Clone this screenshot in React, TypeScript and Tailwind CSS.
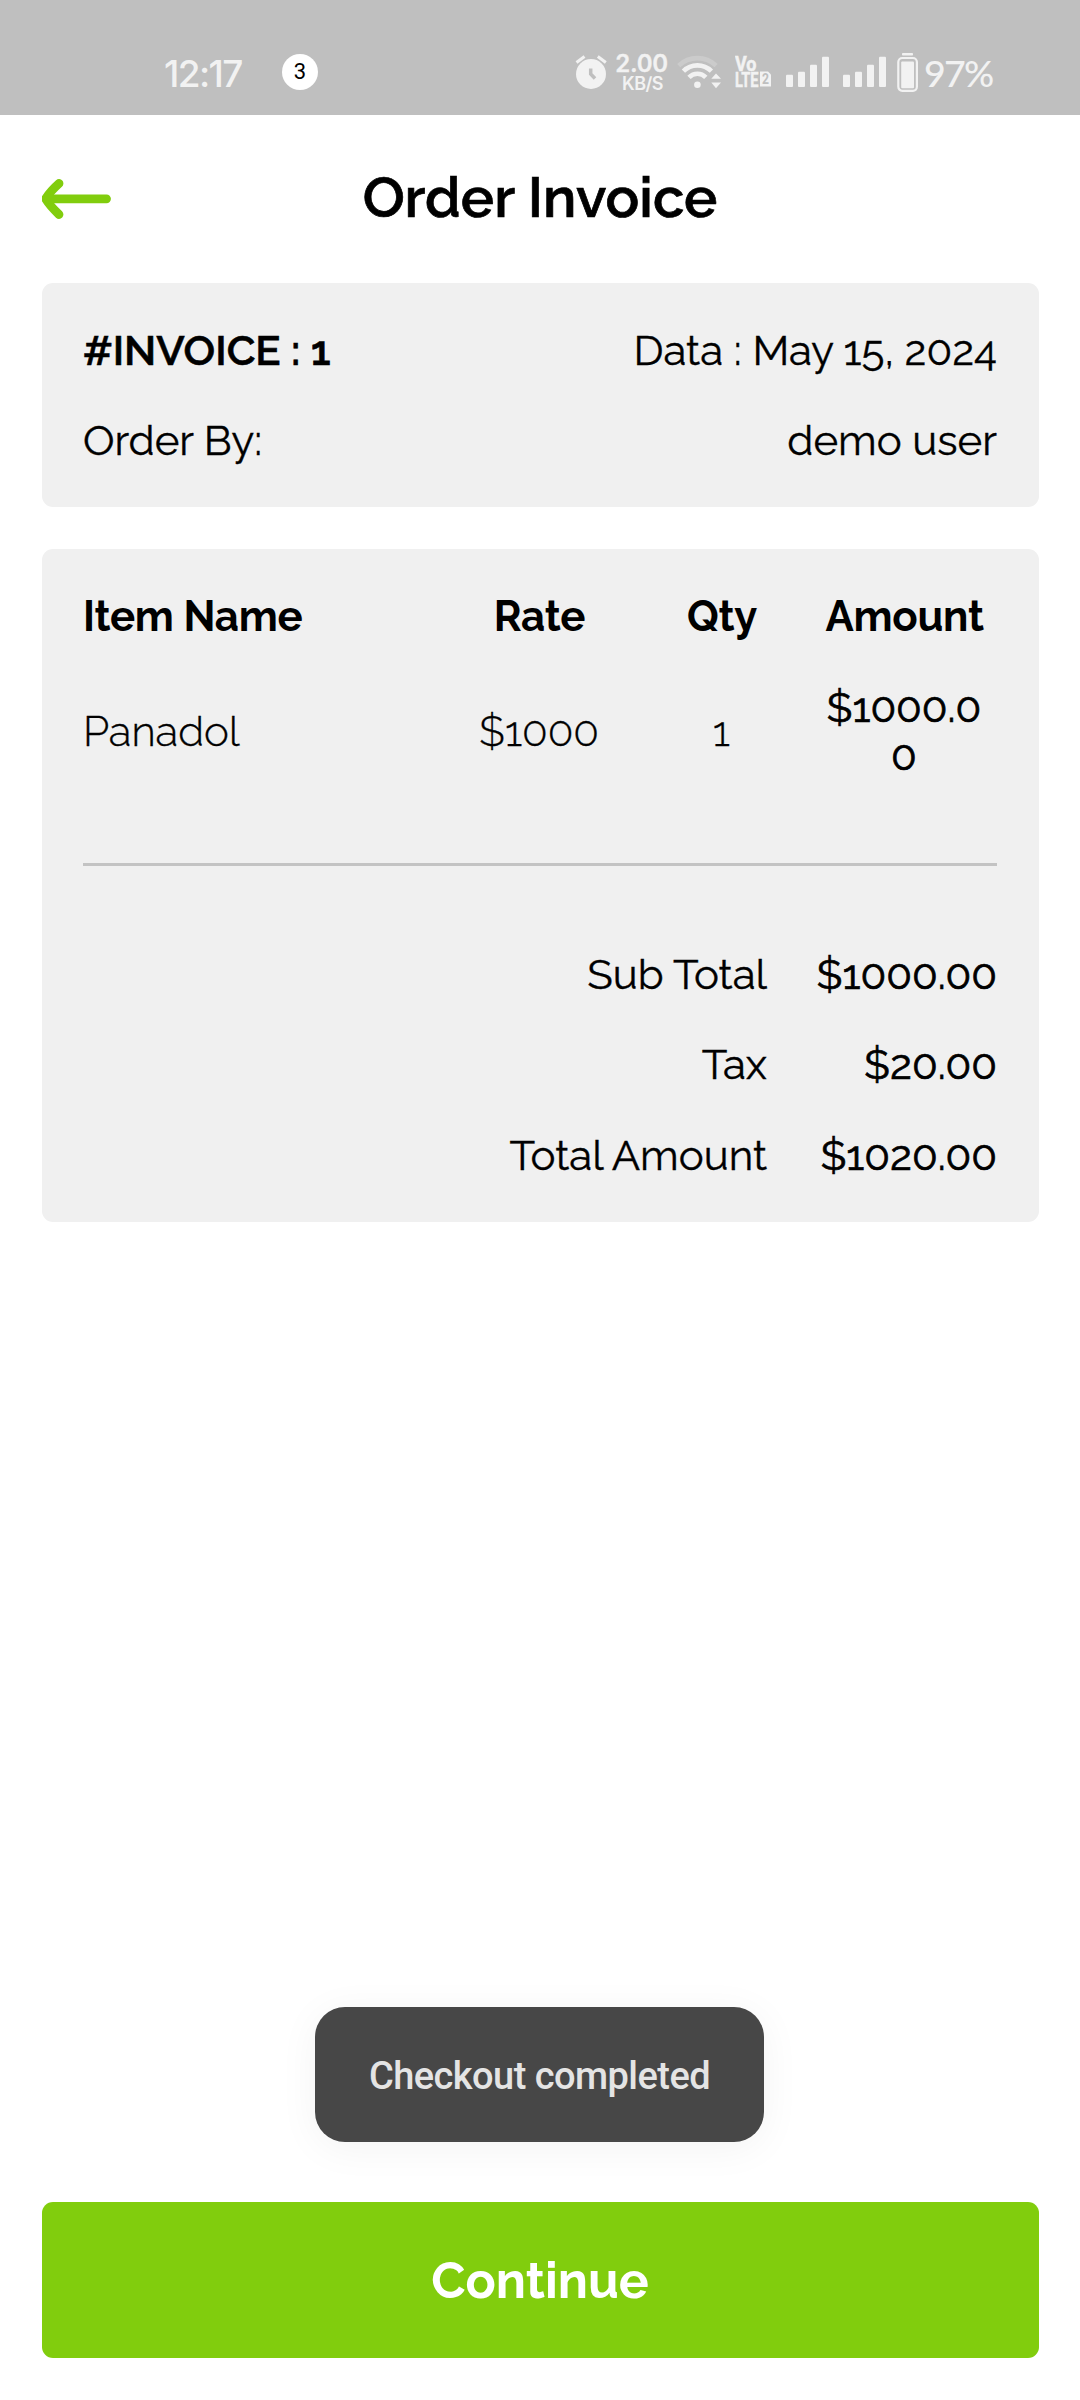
import { ReactNode } from "react";

type Item = { name: string; rate: string; qty: number; amount: string };

const items: Item[] = [{ name: "Panadol", rate: "$1000", qty: 1, amount: "$1000.00" }];

const totals = [
  ["Sub Total", "$1000.00"],
  ["Tax", "$20.00"],
  ["Total Amount", "$1020.00"]
];

function SignalBars() {
  return (
    <svg className="w-[43px] h-10 shrink-0" viewBox="0 0 43 40" fill="currentColor">
      <rect x="0" y="22.7" width="7" height="12.3" rx="1" />
      <rect x="12" y="19.7" width="7" height="15.3" rx="1" />
      <rect x="24" y="12.7" width="7" height="22.3" rx="1" />
      <rect x="36" y="4.7" width="7" height="30.3" rx="1" />
    </svg>
  );
}

function StatusBar() {
  return (
    <div className="h-[115px] pt-[52px] bg-[#bfbfbf] text-[#f2f2f2] flex items-start">
      <span className="ml-[164px] w-[118px] font-['Inter',sans-serif] font-medium text-[37px] leading-[43px] tracking-[-1.6px]">
        12:17
      </span>
      <span className="mt-[2px] w-9 h-9 rounded-full bg-white text-black flex items-center justify-center font-['Roboto',sans-serif] text-[22px] leading-none">
        3
      </span>

      {/* Alarm */}
      <svg className="ml-[257px] w-[33px] h-10 shrink-0" viewBox="0 0 33 40" fill="none">
        <circle cx="16" cy="22" r="15" fill="currentColor" />
        <path d="M1.5 10.5l8-6M22.8 4.5l8 6" stroke="currentColor" strokeWidth={3} />
        <path d="M15.7 16.5V22l4.3 4.5" stroke="#bfbfbf" strokeWidth={3.5} />
      </svg>

      {/* Network speed */}
      <div className="ml-[7px] w-[53px] flex flex-col items-center font-['Inter',sans-serif] font-semibold whitespace-nowrap">
        <span className="text-[24px] leading-[24px] tracking-[-0.3px] [-webkit-text-stroke:0.3px]">2.00</span>
        <span className="ml-[2px] text-[18px] leading-[16px] tracking-[-0.5px]">KB/S</span>
      </div>

      {/* Wifi */}
      <svg className="ml-[9px] w-[46px] h-10 shrink-0" viewBox="0 0 46 40" fill="none" strokeWidth={4.6}>
        <path d="M1.7 13.6a27 27 0 0 1 37.4 0" stroke="#cbcbcb" />
        <path d="M6.4 19.2a19.7 19.7 0 0 1 28 0" stroke="currentColor" />
        <path d="M12 25.4a11.6 11.6 0 0 1 16.8 0" stroke="currentColor" />
        <circle cx="20.4" cy="32.7" r="3.3" fill="currentColor" />
        <path d="M34.3 26.8L39 21.6l5 5.2zM34.3 30.4h9.7L39 36.2z" fill="currentColor" />
      </svg>

      {/* VoLTE */}
      <svg
        className="ml-[12px] w-[37px] h-10 shrink-0 font-['Roboto',sans-serif] font-bold"
        viewBox="0 0 37 40"
        fill="currentColor"
      >
        <g stroke="currentColor" strokeWidth={0.5}>
          <text x="0" y="19.3" fontSize="20" textLength="21.5" lengthAdjust="spacingAndGlyphs">
            Vo
          </text>
          <text x="0" y="34.6" fontSize="19.5" textLength="23.5" lengthAdjust="spacingAndGlyphs">
            LTE
          </text>
        </g>
        <path d="M25 19.5h8l3 3v12H25z" />
        <text x="26.9" y="32.3" fontSize="14.5" fill="#bfbfbf" textLength="7" lengthAdjust="spacingAndGlyphs">
          2
        </text>
      </svg>

      <div className="ml-[14px] flex gap-[14.3px]">
        <SignalBars />
        <SignalBars />
      </div>

      {/* Battery */}
      <svg className="ml-[10.7px] w-[22px] h-10 shrink-0" viewBox="0 0 22 40" fill="currentColor">
        <rect x="5" y="1" width="11" height="2.6" rx="0.8" />
        <rect x="1.3" y="6" width="18.6" height="32.8" rx="4" fill="none" stroke="currentColor" strokeWidth={2.2} />
        <rect x="4.2" y="9.6" width="12.8" height="26.6" rx="1" />
      </svg>
      <span className="ml-[5px] -mt-px font-['Lato',sans-serif] font-medium text-[37.5px] leading-[43px] tracking-[-1.7px]">
        97%
      </span>
    </div>
  );
}

function Card({ children }: { children: ReactNode }) {
  return (
    <section className="rounded-[11px] bg-[#f0f0f0] pl-[41px] pr-[42px] pt-[43.5px] pb-[42px]">{children}</section>
  );
}

export default function App() {
  return (
    <div className="relative w-[1080px] h-[2400px] flex flex-col bg-white text-black font-['Raleway','Lato',sans-serif] text-[42px] leading-[48px]">
      <StatusBar />

      {/* Header */}
      <header className="h-[168px] px-[42px] flex items-center">
        <button className="w-[69px]">
          <svg
            className="w-[69px] h-10"
            viewBox="0 0 69 40"
            fill="none"
            stroke="#81cd0d"
            strokeWidth={8.8}
            strokeLinecap="round"
            strokeLinejoin="round"
          >
            <path d="M17 4.5Q8 12.5 3.6 19.8Q8 27 17 35.5" />
            <path d="M6 19.8h58.5" />
          </svg>
        </button>
        <h1 className="flex-1 mr-[69px] -mt-1 text-center text-[56px] leading-[66px] font-semibold tracking-[0.05px] [-webkit-text-stroke:0.7px]">
          Order Invoice
        </h1>
      </header>

      <main className="flex-1 pl-[42px] pr-[41px] flex flex-col gap-[42.5px] [-webkit-text-stroke:0.35px]">
        <Card>
          <div className="flex justify-between">
            <span className="font-semibold [-webkit-text-stroke:0.6px]">#INVOICE : 1</span>
            <span>Data : May 15, 2024</span>
          </div>
          <div className="mt-[42px] flex justify-between">
            <span>Order By:</span>
            <span>demo user</span>
          </div>
        </Card>

        <Card>
          <div className="mr-px grid grid-cols-[2fr_1fr_1fr_1fr] font-bold text-center tracking-[-0.3px] [-webkit-text-stroke:0px]">
            <span className="text-left">Item Name</span>
            <span>Rate</span>
            <span>Qty</span>
            <span>Amount</span>
          </div>
          {items.map((item) => (
            <div
              key={item.name}
              className="mt-[43px] mr-[2px] grid grid-cols-[2fr_1fr_1fr_1fr] items-center text-center font-light"
            >
              <span className="text-left">{item.name}</span>
              <span>{item.rate}</span>
              <span>{item.qty}</span>
              <span className="min-w-0 px-2 break-all font-normal [-webkit-text-stroke:0.7px]">{item.amount}</span>
            </div>
          ))}

          <hr className="mt-[83.5px] mb-[84.5px] border-0 h-[3px] bg-[#c3c3c3]" />

          <div className="flex flex-col gap-[42.5px]">
            {totals.map(([label, value]) => (
              <div key={label} className="flex text-right">
                <span className="flex-1">{label}</span>
                <span className="w-[230px] [-webkit-text-stroke:0.7px]">{value}</span>
              </div>
            ))}
          </div>
        </Card>
      </main>

      <footer className="pl-[42px] pr-[41px] pb-[42px]">
        <button className="w-full h-[156px] pt-[2px] pr-px rounded-[11px] bg-[#81cd0d] text-white text-[50px] font-bold">
          Continue
        </button>
      </footer>

      {/* Toast */}
      <div className="absolute left-[315px] top-[2007px] w-[449px] h-[135px] pt-[3px] rounded-[30px] bg-[#474747] text-[#e4e4e4] shadow-[0_6px_40px_rgba(0,0,0,0.05)] flex items-center justify-center font-['Roboto',sans-serif] font-medium text-[38px] tracking-[-0.55px] whitespace-nowrap">
        Checkout completed
      </div>
    </div>
  );
}
